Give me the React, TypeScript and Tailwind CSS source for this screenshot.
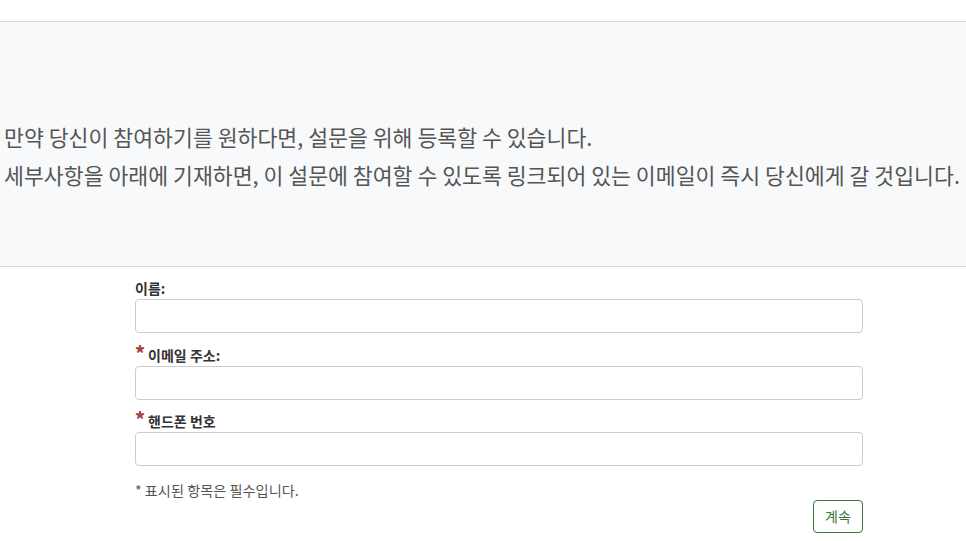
export default function App() {
  const font = { fontFamily: '"Noto Sans CJK KR", "Noto Sans", sans-serif' };
  return (
    <div className="min-h-[541px] bg-white" style={font}>
      <div className="h-[21px]" />
      <div className="border-y border-[#d6d8db] bg-[#f8f9fa] pb-[72px] pt-[96px] pl-1 text-[21.65px] leading-[38px] text-[#555]">
        <p>만약 당신이 참여하기를 원하다면, 설문을 위해 등록할 수 있습니다.</p>
        <p>세부사항을 아래에 기재하면, 이 설문에 참여할 수 있도록 링크되어 있는 이메일이 즉시 당신에게 갈 것입니다.</p>
      </div>

      {/* Registration form */}
      <div className="ml-[135px] w-[728px] pt-[12px]">
        <div className="flex flex-col">
          <label className="text-[14px] font-bold leading-[18px] text-[#333]">이름:</label>
          <input className="mt-[2px] h-[34px] rounded border border-[#ccc] bg-white" />
        </div>
        <div className="mt-[13px] flex flex-col">
          <label className="flex items-start text-[14px] font-bold leading-[18px] text-[#333]">
            <span className="mr-[3px] -mt-[3px] text-[19px] font-black leading-[18px] text-[#a94442]">*</span>이메일 주소:
          </label>
          <input className="mt-[2px] h-[34px] rounded border border-[#ccc] bg-white" />
        </div>
        <div className="mt-[12px] flex flex-col">
          <label className="flex items-start text-[14px] font-bold leading-[18px] text-[#333]">
            <span className="mr-[3px] -mt-[3px] text-[19px] font-black leading-[18px] text-[#a94442]">*</span>핸드폰 번호
          </label>
          <input className="mt-[2px] h-[34px] rounded border border-[#ccc] bg-white" />
        </div>
        <p className="mt-[14px] text-[14.2px] leading-[20px] text-[#555]">* 표시된 항목은 필수입니다.</p>
        <div className="flex justify-end">
          <button className="h-[33px] w-[50px] rounded border border-[#3c763d] bg-white text-[14px] text-[#3c763d]">
            계속
          </button>
        </div>
      </div>
    </div>
  );
}
